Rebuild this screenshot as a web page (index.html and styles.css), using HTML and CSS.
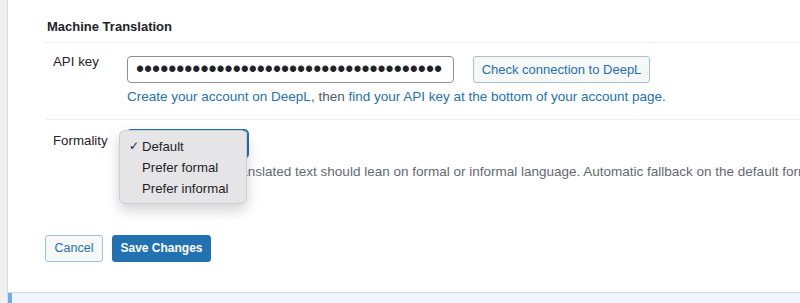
FILE: index.html
```html
<!DOCTYPE html>
<html>
<head>
<meta charset="utf-8">
<link rel="stylesheet" href="styles.css">
</head>
<body>
<div class="layout">
  <div class="rail"></div>
  <div class="main">
    <div class="panel">
      <h2 class="heading">Machine Translation</h2>
      <div class="row row-key">
        <div class="label">API key</div>
        <div class="field">
          <div class="inline">
            <div class="input">••••••••••••••••••••••••••••••••••••••</div>
            <button class="btn btn-check">Check connection to DeepL</button>
          </div>
          <p class="help"><a class="link">Create your account on DeepL</a>, then <a class="link">find your API key at the bottom of your account page</a>.</p>
        </div>
      </div>
      <div class="row row-formality">
        <div class="label">Formality</div>
        <div class="field">
          <div class="select-wrap">
            <div class="select"></div>
            <ul class="menu">
              <li class="menu-item"><span class="check">✓</span>Default</li>
              <li class="menu-item"><span class="check"></span>Prefer formal</li>
              <li class="menu-item"><span class="check"></span>Prefer informal</li>
            </ul>
          </div>
          <p class="desc">Sets whether the translated text should lean on formal or informal language. Automatic fallback on the default formality.</p>
        </div>
      </div>
      <div class="actions">
        <button class="btn btn-cancel">Cancel</button>
        <button class="btn btn-primary">Save Changes</button>
      </div>
    </div>
    <div class="notice"></div>
  </div>
</div>
</body>
</html>
```

FILE: styles.css
```css
* { box-sizing: border-box; }
html, body { margin: 0; padding: 0; }
body {
  width: 800px;
  height: 303px;
  overflow: hidden;
  background: #fff;
  font-family: "Liberation Sans", Arial, sans-serif;
  font-size: 13px;
  color: #1d2327;
}
.layout { display: flex; height: 303px; }
.rail {
  width: 8px;
  flex: none;
  background: #f0f0f1;
  border-right: 1px solid #dcdcde;
}
.main { flex: 1; display: flex; flex-direction: column; min-width: 0; }
.panel {
  height: 293px;
  padding-left: 37px;
  border-bottom: 1px solid #dcdcde;
  overflow: hidden;
}
.heading {
  margin: 0;
  height: 43px;
  padding: 18px 0 0 2px;
  font-size: 13px;
  line-height: 18px;
  font-weight: 700;
  border-bottom: 1px solid #f0f0f1;
}
.row {
  display: flex;
  border-bottom: 1px solid #f0f0f1;
}
.row-key { height: 77px; padding-top: 13px; }
.row-formality { border-bottom: none; padding-top: 10px; height: 115px; }
.label {
  width: 82px;
  flex: none;
  padding-left: 8px;
  line-height: 18px;
  font-size: 13.3px;
}
.row-key .label { margin-top: -3px; }
.row-formality .label { margin-top: 2px; }
.field { flex: 1; min-width: 0; }
.inline { display: flex; gap: 19px; align-items: center; }
.input {
  width: 327px;
  height: 27px;
  border: 1px solid #8c8f94;
  border-radius: 4px;
  padding: 0 0 0 8px;
  font-size: 23px;
  line-height: 25px;
  color: #1d2327;
  white-space: nowrap;
  overflow: hidden;
}
.btn {
  font-family: inherit;
  font-size: 13px;
  height: 27px;
  padding: 0 10px;
  border-radius: 3px;
  border: 1px solid #a5bfd8;
  background: #f6f7f7;
  color: #2271b1;
  line-height: 25px;
  cursor: pointer;
}
.btn-check { width: 177px; padding: 0; }
.help {
  margin: 5px 0 0;
  line-height: 18px;
  font-size: 13.5px;
  color: #50575e;
  white-space: nowrap;
}
.link { color: #2271b1; text-decoration: none; }
.select-wrap { position: relative; width: 121px; height: 28px; }
.select {
  width: 121px;
  height: 28px;
  border: 1px solid #2271b1;
  box-shadow: 0 0 0 1px #2271b1;
  border-radius: 4px;
  background: #fff;
}
.menu {
  position: absolute;
  left: -8px;
  top: 0;
  width: 128px;
  height: 74px;
  margin: 0;
  padding: 5px 0 0 0;
  list-style: none;
  background: #e5e5e7;
  border: 1px solid #cdcdcf;
  border-radius: 6px;
  box-shadow: 0 6px 14px rgba(0,0,0,0.18);
}
.menu-item {
  display: flex;
  height: 21px;
  line-height: 21px;
  padding-left: 9px;
  color: #1f1f1f;
  font-size: 13.2px;
}
.check {
  width: 13px;
  flex: none;
  font-family: "DejaVu Sans", sans-serif;
  font-size: 12px;
}
.desc {
  margin: 5px 0 0;
  line-height: 18px;
  font-size: 13.5px;
  color: #646970;
  white-space: nowrap;
}
.actions { display: flex; gap: 9px; }
.btn-cancel { width: 58px; padding: 0; font-size: 12.5px; }
.btn-primary {
  width: 99px;
  padding: 0;
  font-size: 12px;
  background: #2271b1;
  border-color: #2271b1;
  color: #fff;
  font-weight: 700;
}
.notice {
  flex: 1;
  background: #f0f6fc;
  border-left: 4px solid #72aee6;
}
```
